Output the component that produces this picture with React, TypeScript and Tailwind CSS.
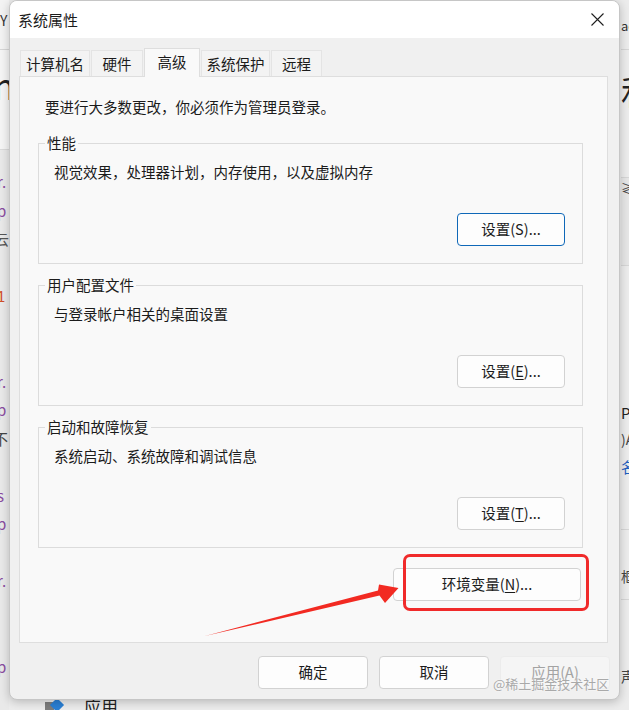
import React from 'react';

const tabs = [
  { label: '计算机名', w: 'w-[70px]' },
  { label: '硬件', w: 'w-[52px]' },
  { label: '高级', w: 'w-[56px]', active: true },
  { label: '系统保护', w: 'w-[69px]' },
  { label: '远程', w: 'w-[51px]' },
];

// glyphs of the code editor that peeks out left of the dialog
const codeRows: { t: string; c: string }[] = [
  { t: 'r.', c: 'text-[#8a4ca0]' },
  { t: 'p', c: 'text-[#8a4ca0]' },
  { t: '云', c: 'text-[#555] -ml-[6px]' },
  { t: '', c: '' },
  { t: '1', c: 'text-[#d0502a]' },
  { t: '', c: '' },
  { t: '', c: '' },
  { t: 'r.', c: 'text-[#8a4ca0]' },
  { t: 'p', c: 'text-[#8a4ca0]' },
  { t: '不', c: 'text-[#444] -ml-[7px]' },
  { t: '', c: '' },
  { t: 's', c: 'text-[#8a4ca0]' },
  { t: 'p', c: 'text-[#8a4ca0]' },
  { t: '', c: '' },
  { t: 'r.', c: 'text-[#8a4ca0]' },
  { t: '', c: '' },
  { t: '', c: '' },
  { t: 'p', c: 'text-[#8a4ca0]' },
];

const Btn: React.FC<{ children: React.ReactNode; focused?: boolean; disabled?: boolean; w?: string }> = ({
  children,
  focused,
  disabled,
  w = 'w-[108px]',
}) => (
  <button
    className={`${w} h-[33px] rounded-[4px] border text-[14.5px] leading-none ${
      disabled
        ? 'bg-[#f5f5f5] border-[#ececec] text-[#a3a3a3]'
        : focused
        ? 'bg-[#fdfdfd] border-[#0f68b8] text-[#1b1b1b]'
        : 'bg-[#fdfdfd] border-[#d2d2d2] text-[#1b1b1b]'
    }`}
  >
    {children}
  </button>
);

const Group: React.FC<{ title: string; desc: string; button: React.ReactNode }> = ({ title, desc, button }) => (
  <div className="relative h-[121px] border border-[#dcdcdc] flex flex-col">
    <span className="absolute -top-[11px] left-[6px] px-[2px] bg-[#f9f9f9] leading-[20px]">{title}</span>
    <div className="pt-[18px] pl-[15px] leading-[20px]">{desc}</div>
    <div className="mt-auto flex justify-end pr-[17px] pb-[17px]">{button}</div>
  </div>
);

const U: React.FC<{ children: React.ReactNode }> = ({ children }) => <span className="underline underline-offset-2">{children}</span>;

export default function App() {
  return (
    <div className="relative w-[629px] h-[710px] overflow-hidden bg-[#ececec] flex font-['Noto_Sans_CJK_SC',sans-serif] text-[14.5px] text-[#1b1b1b] whitespace-nowrap">
      {/* left edge of the window behind */}
      <div className="w-[9px] shrink-0 flex flex-col">
        <div className="h-[50px] bg-[#f3f3f3] border-b border-[#d6d6d6] pt-[10px] text-[14px] text-[#333]">Y</div>
        <div className="h-[100px] bg-[#f5f5f5] border-b border-[#dadada] pt-[16px] -ml-[7px] text-[36px] leading-none text-[#222]">n</div>
        <div className="flex-1 bg-[#e9e9e9] pt-[22px] flex flex-col">
          {codeRows.map((r, i) => (
            <div key={i} className={`h-[28.5px] text-[15px] leading-[20px] -ml-[3px] ${r.c}`}>{r.t}</div>
          ))}
        </div>
      </div>

      <div className="w-[611px] shrink-0 flex flex-col">
        {/* dialog */}
        <div className="relative z-10 h-[700px] rounded-[8px] border border-[#c6c6c6] bg-[#f0f0f0] shadow-[0_2px_10px_rgba(0,0,0,0.22)] overflow-hidden flex flex-col">
          <div className="h-[37px] bg-white flex items-center justify-between pl-[8px] pr-[15px]">
            <span className="text-[15px] leading-none">系统属性</span>
            <svg width="13" height="13" viewBox="0 0 13 13">
              <path d="M0.5 0.5 L12.5 12.5 M12.5 0.5 L0.5 12.5" stroke="#1f1f1f" strokeWidth="1.1" />
            </svg>
          </div>

          <div className="pt-[10px] pl-[9px] pr-[11px] flex flex-col">
            <div className="flex items-end h-[28px] ml-[1px] gap-[1px]">
              {tabs.map(t => (
                <div
                  key={t.label}
                  className={`${t.w} text-center leading-[20px] border border-b-0 ${
                    t.active
                      ? 'h-[29px] -mb-px relative z-10 bg-[#f9f9f9] border-[#dedede] pt-[3px]'
                      : 'h-[26px] bg-[#f3f3f3] border-[#e4e4e4] pt-[3px]'
                  }`}
                >
                  {t.label}
                </div>
              ))}
            </div>

            <div className="h-[567px] border border-[#dedede] bg-[#f9f9f9] flex flex-col">
              <div className="pt-[20px] pl-[25px] leading-[20px]">要进行大多数更改，你必须作为管理员登录。</div>
              <div className="mt-[26px] ml-[18px] mr-[24px] flex flex-col gap-[21px]">
                <Group title="性能" desc="视觉效果，处理器计划，内存使用，以及虚拟内存" button={<Btn focused>设置(S)...</Btn>} />
                <Group title="用户配置文件" desc="与登录帐户相关的桌面设置" button={<Btn>设置(<U>E</U>)...</Btn>} />
                <Group title="启动和故障恢复" desc="系统启动、系统故障和调试信息" button={<Btn>设置(<U>T</U>)...</Btn>} />
              </div>
              <div className="mt-[20px] mr-[26px] flex justify-end">
                <Btn w="w-[188px]">环境变量(<U>N</U>)...</Btn>
              </div>
            </div>

            <div className="mt-[13px] -mr-[2px] flex justify-end gap-[11px]">
              <Btn w="w-[110px]">确定</Btn>
              <Btn w="w-[110px]">取消</Btn>
              <Btn w="w-[110px]" disabled>应用(A)</Btn>
            </div>
          </div>
        </div>

        {/* bottom edge of the window behind */}
        <div className="h-[10px] flex items-start pl-[36px] gap-[22px]">
          <div className="flex items-start pt-[2px]">
            <div className="w-[9px] h-[9px] bg-[#7d7d7d]" />
            <div className="w-[10px] h-[10px] -ml-[2px] -mt-[2px] rotate-45 bg-[#2a7fd4]" />
          </div>
          <span className="-mt-[3px] text-[17px] leading-none text-[#222]">应用</span>
        </div>
      </div>

      {/* right edge of the window behind */}
      <div className="w-[9px] shrink-0 flex flex-col pl-[1px] text-[#444]">
        <div className="h-[50px] border-b border-[#d6d6d6] pt-[16px] text-[13px] text-[#333]">ac</div>
        <div className="h-[128px] border-b border-[#d6d6d6] pt-[24px] text-[34px] leading-none text-[#222]">和</div>
        <div className="h-[88px] bg-[#e6e6e6] border-b border-[#d6d6d6] text-[13px]">≷</div>
        <div className="h-[264px] border-b border-[#d6d6d6] pt-[136px] flex flex-col">
          <span className="h-[27px] text-[15px] text-[#222]">PT</span>
          <span className="h-[27px] text-[14px]">)A</span>
          <span className="h-[27px] text-[15px] text-[#1f5fbf]">名</span>
        </div>
        <div className="h-[70px] border-b border-[#d6d6d6] pt-[36px] text-[14px]">框</div>
        <div className="flex-1 pt-[66px] text-[14px]">声</div>
      </div>

      {/* annotation */}
      <div className="absolute z-20 left-[403px] top-[554px] w-[186px] h-[57px] rounded-[7px] border-[3px] border-[#f02a2a]" />
      <svg className="absolute z-20 left-0 top-0 pointer-events-none" width="629" height="710">
        <polygon points="205,636 378,590.5 379,584.5 398.5,588 385,603 379.5,595.5" fill="#f22a22" />
      </svg>
      <span className="absolute z-20 left-[493px] top-[675px] text-[13px] leading-[18px] text-[#a9a9a9] [text-shadow:0_0_2px_#fff]">@稀土掘金技术社区</span>
    </div>
  );
}
